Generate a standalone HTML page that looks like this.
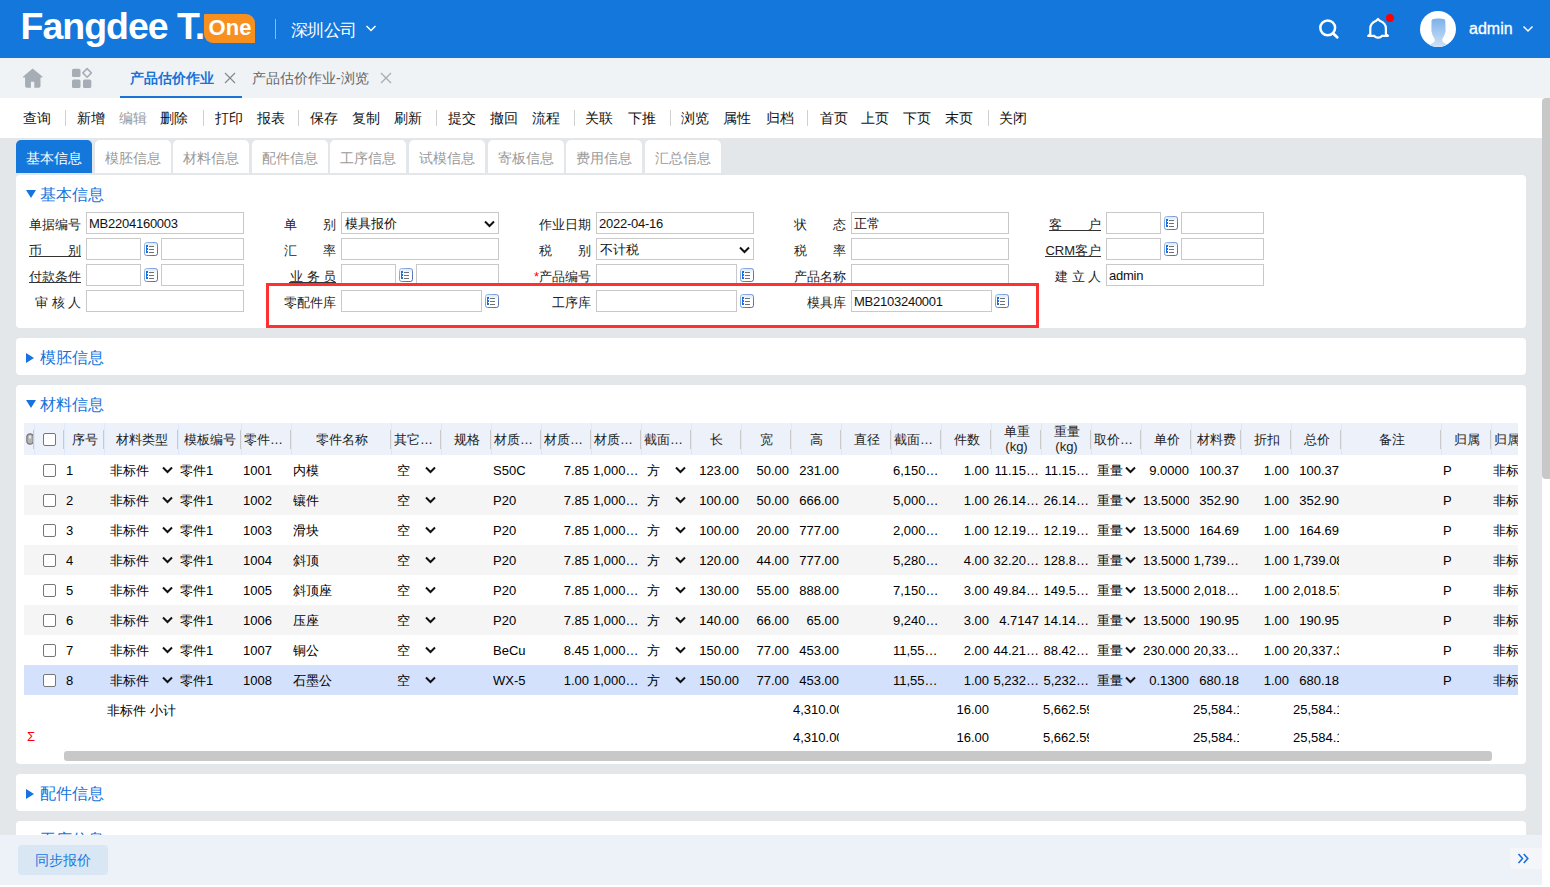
<!DOCTYPE html><html><head><meta charset="utf-8"><style>
*{box-sizing:border-box}
html,body{margin:0;padding:0}
body{width:1550px;height:887px;overflow:hidden;position:relative;background:#fff;font-family:"Liberation Sans",sans-serif;font-size:13px;color:#000}
.ab{position:absolute}
.nw{white-space:nowrap}
.c{display:inline-block;width:1em;text-align:center;font-style:normal}
#hdr{left:0;top:0;width:1550px;height:58px;background:#1377dc}
#tabbar{left:0;top:58px;width:1550px;height:40px;background:#eff3f6}
#toolbar{left:0;top:98px;width:1542px;height:40px;background:#fff}
#content{left:0;top:138px;width:1542px;height:747px;background:#e3e7ea}
.tb{top:108px;font-size:14px;line-height:20px;color:#000;white-space:nowrap}
.tsep{top:110px;width:1px;height:16px;background:#d0d0d0}
.stab{top:140px;width:76px;height:33px;background:#fff;border-radius:5px 5px 0 0;font-size:14px;line-height:34px;padding-top:1px;text-align:center;color:#999}
.stab.on{background:#1377dc;color:#fff}
.panel{left:16px;width:1510px;background:#fff;border-radius:4px}
.ptitle{font-size:16px;line-height:20px;color:#1473de;white-space:nowrap}
.tri-d{width:0;height:0;border-left:5px solid transparent;border-right:5px solid transparent;border-top:8px solid #1473de}
.tri-r{width:0;height:0;border-top:5px solid transparent;border-bottom:5px solid transparent;border-left:8px solid #1473de}
.inp{height:22px;border:1px solid #c9c9c9;background:#fff;font-size:13px;line-height:22px;padding-left:2px;white-space:nowrap;color:#111;letter-spacing:-0.25px}
.lbl{height:22px;line-height:22px;font-size:13px;color:#222;white-space:nowrap}
.lj{display:flex;justify-content:space-between}
.u{text-decoration:underline}
.ic{width:14px;height:14px}
.chev{width:9px;height:6px}
.th{top:423px;height:32px;background:#edf1f9}
.cell{position:absolute;overflow:hidden;white-space:nowrap;text-overflow:clip;height:30px;line-height:30px;padding:0 2px}
</style></head><body>

<div id="hdr" class="ab"></div>
<div class="ab nw" style="left:20.5px;top:6.3px;font-size:37.5px;line-height:40px;font-weight:bold;color:#fff;letter-spacing:-1px">Fangdee T.</div>
<div class="ab" style="left:204px;top:13.5px;width:51px;height:29px;background:#f7901e;border-radius:1px 9px 0 9px"></div>
<div class="ab nw" style="left:207px;top:13px;width:46px;text-align:center;font-size:22px;line-height:30px;color:#fff;font-weight:bold">One</div>
<div class="ab" style="left:275px;top:19px;width:1px;height:20px;background:rgba(255,255,255,.5)"></div>
<div class="ab nw" style="left:290.5px;top:19.5px;font-size:16.5px;line-height:20px;color:#fff"><i class="c">深</i><i class="c">圳</i><i class="c">公</i><i class="c">司</i></div>
<svg class="ab" style="left:365px;top:24px" width="12" height="9" viewBox="0 0 12 9"><path d="M1.5 2 L6 6.5 L10.5 2" fill="none" stroke="#fff" stroke-width="1.5"/></svg>
<svg class="ab" style="left:1316px;top:16px" width="26" height="26" viewBox="0 0 26 26"><circle cx="11.7" cy="11.8" r="7.4" fill="none" stroke="#fff" stroke-width="2.5"/><path d="M17 17.2 L21.2 21.2" stroke="#fff" stroke-width="2.8" stroke-linecap="round"/></svg>
<svg class="ab" style="left:1365px;top:16px" width="26" height="26" viewBox="0 0 26 26"><path d="M5.3 18.2 L5.3 12.5 C5.3 8.5 8 6 11.2 4.8 L13 3 L14.8 4.8 C18 6 20.9 8.5 20.9 12.5 L20.9 18.2 L23 19.9 L16.8 19.9 C15.8 22.2 10.4 22.2 9.4 19.9 L3.2 19.9 Z" fill="none" stroke="#fff" stroke-width="2.2" stroke-linejoin="round"/></svg>
<div class="ab" style="left:1386px;top:14px;width:8px;height:8px;border-radius:50%;background:#ff0000"></div>
<div class="ab" style="left:1420px;top:11px;width:36px;height:36px;border-radius:50%;background:#fff;overflow:hidden"><svg width="36" height="36" viewBox="0 0 36 36"><defs><linearGradient id="ag" x1="0" y1="0" x2="0" y2="1"><stop offset="0" stop-color="#7cb1ea"/><stop offset="1" stop-color="#d3e4f7"/></linearGradient></defs><path d="M11.5 9.5 Q12.5 7.3 18.5 7.6 Q24.5 7.3 25.3 9.5 L25.6 20 Q25 24 22.5 27.8 Q21.6 29.8 23.2 31.2 Q25.5 33 28 34 L29 37 L8 37 L9 34 Q11.5 33 13.8 31.2 Q15.4 29.8 14.5 27.8 Q12 24 11.4 20 Z" fill="url(#ag)"/></svg></div>
<div class="ab nw" style="left:1469px;top:19px;font-size:16px;line-height:20px;color:#fff;-webkit-text-stroke:0.3px #fff">admin</div>
<svg class="ab" style="left:1521.5px;top:24px" width="12" height="10" viewBox="0 0 12 10"><path d="M1.5 2.5 L6 7 L10.5 2.5" fill="none" stroke="#fff" stroke-width="1.5"/></svg>
<div id="tabbar" class="ab"></div>
<svg class="ab" style="left:23px;top:68px;overflow:visible" width="20" height="20" viewBox="0 0 20 20"><path d="M9.6 0.4 L19.4 8.6 Q20 9.6 19 9.6 L17.5 9.6 L17.5 18 Q17.5 19.7 15.8 19.7 L11.3 19.7 L11.3 13.8 L7.9 13.8 L7.9 19.7 L3.8 19.7 Q2.1 19.7 2.1 18 L2.1 9.6 L0.6 9.6 Q-0.4 9.6 0.2 8.6 Z" fill="#a7adb5"/></svg>
<svg class="ab" style="left:72px;top:68px;overflow:visible" width="20" height="20" viewBox="0 0 20 20"><rect x="0" y="0.8" width="8.5" height="8.3" rx="1.6" fill="#a7adb5"/><rect x="0" y="11.5" width="8.5" height="8.5" rx="1.6" fill="#a7adb5"/><rect x="11" y="11.5" width="8.3" height="8.5" rx="1.6" fill="#a7adb5"/><path d="M15.1 0.6 L19.4 4.9 L15.1 9.2 L10.8 4.9 Z" fill="none" stroke="#a7adb5" stroke-width="1.5" stroke-linejoin="round"/></svg>
<div class="ab nw" style="left:130px;top:68px;font-size:14px;line-height:20px;color:#1a73d9;font-weight:bold"><i class="c">产</i><i class="c">品</i><i class="c">估</i><i class="c">价</i><i class="c">作</i><i class="c">业</i></div>
<svg class="ab" style="left:224px;top:72px" width="12" height="12" viewBox="0 0 12 12"><path d="M1 1 L11 11 M11 1 L1 11" stroke="#888" stroke-width="1.2"/></svg>
<div class="ab" style="left:120px;top:96px;width:122px;height:2px;background:#1a73d9"></div>
<div class="ab nw" style="left:252px;top:68px;font-size:14px;line-height:20px;color:#666"><i class="c">产</i><i class="c">品</i><i class="c">估</i><i class="c">价</i><i class="c">作</i><i class="c">业</i>-<i class="c">浏</i><i class="c">览</i></div>
<svg class="ab" style="left:380px;top:72px" width="12" height="12" viewBox="0 0 12 12"><path d="M1 1 L11 11 M11 1 L1 11" stroke="#aaa" stroke-width="1.2"/></svg>
<div id="toolbar" class="ab"></div>
<div class="ab tb" style="left:23.0px;color:#111"><i class="c">查</i><i class="c">询</i></div>
<div class="ab tsep" style="left:65px"></div>
<div class="ab tb" style="left:76.5px;color:#111"><i class="c">新</i><i class="c">增</i></div>
<div class="ab tb" style="left:119.0px;color:#999"><i class="c">编</i><i class="c">辑</i></div>
<div class="ab tb" style="left:160.0px;color:#111"><i class="c">删</i><i class="c">除</i></div>
<div class="ab tsep" style="left:203px"></div>
<div class="ab tb" style="left:214.5px;color:#111"><i class="c">打</i><i class="c">印</i></div>
<div class="ab tb" style="left:256.5px;color:#111"><i class="c">报</i><i class="c">表</i></div>
<div class="ab tsep" style="left:298px"></div>
<div class="ab tb" style="left:310.0px;color:#111"><i class="c">保</i><i class="c">存</i></div>
<div class="ab tb" style="left:352.0px;color:#111"><i class="c">复</i><i class="c">制</i></div>
<div class="ab tb" style="left:394.0px;color:#111"><i class="c">刷</i><i class="c">新</i></div>
<div class="ab tsep" style="left:436px"></div>
<div class="ab tb" style="left:448.0px;color:#111"><i class="c">提</i><i class="c">交</i></div>
<div class="ab tb" style="left:490.0px;color:#111"><i class="c">撤</i><i class="c">回</i></div>
<div class="ab tb" style="left:532.0px;color:#111"><i class="c">流</i><i class="c">程</i></div>
<div class="ab tsep" style="left:574px"></div>
<div class="ab tb" style="left:585.0px;color:#111"><i class="c">关</i><i class="c">联</i></div>
<div class="ab tb" style="left:628.0px;color:#111"><i class="c">下</i><i class="c">推</i></div>
<div class="ab tsep" style="left:670px"></div>
<div class="ab tb" style="left:681.0px;color:#111"><i class="c">浏</i><i class="c">览</i></div>
<div class="ab tb" style="left:723.0px;color:#111"><i class="c">属</i><i class="c">性</i></div>
<div class="ab tb" style="left:766.0px;color:#111"><i class="c">归</i><i class="c">档</i></div>
<div class="ab tsep" style="left:807px"></div>
<div class="ab tb" style="left:819.5px;color:#111"><i class="c">首</i><i class="c">页</i></div>
<div class="ab tb" style="left:861.0px;color:#111"><i class="c">上</i><i class="c">页</i></div>
<div class="ab tb" style="left:903.0px;color:#111"><i class="c">下</i><i class="c">页</i></div>
<div class="ab tb" style="left:945.0px;color:#111"><i class="c">末</i><i class="c">页</i></div>
<div class="ab tsep" style="left:988px"></div>
<div class="ab tb" style="left:998.5px;color:#111"><i class="c">关</i><i class="c">闭</i></div>
<div id="content" class="ab"></div>
<div class="ab stab on" style="left:16.0px"><i class="c">基</i><i class="c">本</i><i class="c">信</i><i class="c">息</i></div>
<div class="ab stab" style="left:94.6px"><i class="c">模</i><i class="c">胚</i><i class="c">信</i><i class="c">息</i></div>
<div class="ab stab" style="left:173.2px"><i class="c">材</i><i class="c">料</i><i class="c">信</i><i class="c">息</i></div>
<div class="ab stab" style="left:251.8px"><i class="c">配</i><i class="c">件</i><i class="c">信</i><i class="c">息</i></div>
<div class="ab stab" style="left:330.4px"><i class="c">工</i><i class="c">序</i><i class="c">信</i><i class="c">息</i></div>
<div class="ab stab" style="left:409.0px"><i class="c">试</i><i class="c">模</i><i class="c">信</i><i class="c">息</i></div>
<div class="ab stab" style="left:487.6px"><i class="c">寄</i><i class="c">板</i><i class="c">信</i><i class="c">息</i></div>
<div class="ab stab" style="left:566.2px"><i class="c">费</i><i class="c">用</i><i class="c">信</i><i class="c">息</i></div>
<div class="ab stab" style="left:644.8px"><i class="c">汇</i><i class="c">总</i><i class="c">信</i><i class="c">息</i></div>
<div class="ab panel" style="top:175px;height:153px"></div>
<div class="ab tri-d" style="left:26px;top:190px"></div>
<div class="ab ptitle" style="left:40px;top:185px"><i class="c">基</i><i class="c">本</i><i class="c">信</i><i class="c">息</i></div>
<div class="ab lbl" style="left:-19px;top:214px;width:100px;text-align:right"><i class="c">单</i><i class="c">据</i><i class="c">编</i><i class="c">号</i></div>
<div class="ab inp" style="left:86px;top:212px;width:158px;padding-left:2px">MB2204160003</div>
<div class="ab lbl lj" style="left:284px;top:214px;width:52px"><span><i class="c">单</i></span><span><i class="c">别</i></span></div>
<div class="ab inp" style="left:341px;top:212px;width:158px;padding-left:3px"><i class="c">模</i><i class="c">具</i><i class="c">报</i><i class="c">价</i></div>
<svg class="ab" style="left:483.5px;top:219.5px" width="11" height="8" viewBox="0 0 11 8"><path d="M1 1.5 L5.5 6 L10 1.5" fill="none" stroke="#111" stroke-width="2"/></svg>
<div class="ab lbl" style="left:491px;top:214px;width:100px;text-align:right"><i class="c">作</i><i class="c">业</i><i class="c">日</i><i class="c">期</i></div>
<div class="ab inp" style="left:596px;top:212px;width:158px;padding-left:2px">2022-04-16</div>
<div class="ab lbl lj" style="left:794px;top:214px;width:52px"><span><i class="c">状</i></span><span><i class="c">态</i></span></div>
<div class="ab inp" style="left:851px;top:212px;width:158px;padding-left:2px"><i class="c">正</i><i class="c">常</i></div>
<div class="ab lbl lj" style="left:1049px;top:214px;width:52px"><span><i class="c">客</i></span><span><i class="c">户</i></span></div>
<div class="ab" style="left:1049px;top:230px;width:52px;height:1px;background:#333"></div>
<div class="ab inp" style="left:1106px;top:212px;width:55px;padding-left:2px"></div>
<svg class="ab ic" style="left:1164px;top:216px" width="14" height="14" viewBox="0 0 14 14"><defs><linearGradient id="ig1" x1="0" y1="0" x2="1" y2="1"><stop offset="0" stop-color="#9cc2f2"/><stop offset="1" stop-color="#4c5fa8"/></linearGradient><linearGradient id="if1" x1="0" y1="0" x2="0" y2="1"><stop offset="0" stop-color="#d8e8fb"/><stop offset="0.45" stop-color="#fff"/></linearGradient></defs><rect x="0.5" y="0.5" width="13" height="13" rx="2.2" fill="url(#if1)" stroke="url(#ig1)"/><rect x="2" y="3" width="1" height="8" fill="#1a6fe0"/><rect x="3" y="3" width="1" height="2" fill="#1a6fe0"/><rect x="3" y="6" width="1" height="2" fill="#1a6fe0"/><rect x="3" y="9" width="1" height="2" fill="#1a6fe0"/><rect x="5" y="4" width="5" height="1" fill="#707070"/><rect x="5" y="7" width="5" height="1" fill="#707070"/><rect x="5" y="10" width="5" height="1" fill="#707070"/></svg>
<div class="ab inp" style="left:1181px;top:212px;width:83px;padding-left:2px"></div>
<div class="ab lbl lj" style="left:29px;top:240px;width:52px"><span><i class="c">币</i></span><span><i class="c">别</i></span></div>
<div class="ab" style="left:29px;top:256px;width:52px;height:1px;background:#333"></div>
<div class="ab inp" style="left:86px;top:238px;width:55px;padding-left:2px"></div>
<svg class="ab ic" style="left:144px;top:242px" width="14" height="14" viewBox="0 0 14 14"><defs><linearGradient id="ig2" x1="0" y1="0" x2="1" y2="1"><stop offset="0" stop-color="#9cc2f2"/><stop offset="1" stop-color="#4c5fa8"/></linearGradient><linearGradient id="if2" x1="0" y1="0" x2="0" y2="1"><stop offset="0" stop-color="#d8e8fb"/><stop offset="0.45" stop-color="#fff"/></linearGradient></defs><rect x="0.5" y="0.5" width="13" height="13" rx="2.2" fill="url(#if2)" stroke="url(#ig2)"/><rect x="2" y="3" width="1" height="8" fill="#1a6fe0"/><rect x="3" y="3" width="1" height="2" fill="#1a6fe0"/><rect x="3" y="6" width="1" height="2" fill="#1a6fe0"/><rect x="3" y="9" width="1" height="2" fill="#1a6fe0"/><rect x="5" y="4" width="5" height="1" fill="#707070"/><rect x="5" y="7" width="5" height="1" fill="#707070"/><rect x="5" y="10" width="5" height="1" fill="#707070"/></svg>
<div class="ab inp" style="left:161px;top:238px;width:83px;padding-left:2px"></div>
<div class="ab lbl lj" style="left:284px;top:240px;width:52px"><span><i class="c">汇</i></span><span><i class="c">率</i></span></div>
<div class="ab inp" style="left:341px;top:238px;width:158px;padding-left:2px"></div>
<div class="ab lbl lj" style="left:539px;top:240px;width:52px"><span><i class="c">税</i></span><span><i class="c">别</i></span></div>
<div class="ab inp" style="left:596px;top:238px;width:158px;padding-left:3px"><i class="c">不</i><i class="c">计</i><i class="c">税</i></div>
<svg class="ab" style="left:738.5px;top:245.5px" width="11" height="8" viewBox="0 0 11 8"><path d="M1 1.5 L5.5 6 L10 1.5" fill="none" stroke="#111" stroke-width="2"/></svg>
<div class="ab lbl lj" style="left:794px;top:240px;width:52px"><span><i class="c">税</i></span><span><i class="c">率</i></span></div>
<div class="ab inp" style="left:851px;top:238px;width:158px;padding-left:2px"></div>
<div class="ab lbl" style="left:1001px;top:240px;width:100px;text-align:right">CRM<i class="c">客</i><i class="c">户</i></div>
<div class="ab" style="left:1045px;top:256px;width:56px;height:1px;background:#333"></div>
<div class="ab inp" style="left:1106px;top:238px;width:55px;padding-left:2px"></div>
<svg class="ab ic" style="left:1164px;top:242px" width="14" height="14" viewBox="0 0 14 14"><defs><linearGradient id="ig3" x1="0" y1="0" x2="1" y2="1"><stop offset="0" stop-color="#9cc2f2"/><stop offset="1" stop-color="#4c5fa8"/></linearGradient><linearGradient id="if3" x1="0" y1="0" x2="0" y2="1"><stop offset="0" stop-color="#d8e8fb"/><stop offset="0.45" stop-color="#fff"/></linearGradient></defs><rect x="0.5" y="0.5" width="13" height="13" rx="2.2" fill="url(#if3)" stroke="url(#ig3)"/><rect x="2" y="3" width="1" height="8" fill="#1a6fe0"/><rect x="3" y="3" width="1" height="2" fill="#1a6fe0"/><rect x="3" y="6" width="1" height="2" fill="#1a6fe0"/><rect x="3" y="9" width="1" height="2" fill="#1a6fe0"/><rect x="5" y="4" width="5" height="1" fill="#707070"/><rect x="5" y="7" width="5" height="1" fill="#707070"/><rect x="5" y="10" width="5" height="1" fill="#707070"/></svg>
<div class="ab inp" style="left:1181px;top:238px;width:83px;padding-left:2px"></div>
<div class="ab lbl" style="left:-19px;top:266px;width:100px;text-align:right"><i class="c">付</i><i class="c">款</i><i class="c">条</i><i class="c">件</i></div>
<div class="ab" style="left:29px;top:282px;width:52px;height:1px;background:#333"></div>
<div class="ab inp" style="left:86px;top:264px;width:55px;padding-left:2px"></div>
<svg class="ab ic" style="left:144px;top:268px" width="14" height="14" viewBox="0 0 14 14"><defs><linearGradient id="ig4" x1="0" y1="0" x2="1" y2="1"><stop offset="0" stop-color="#9cc2f2"/><stop offset="1" stop-color="#4c5fa8"/></linearGradient><linearGradient id="if4" x1="0" y1="0" x2="0" y2="1"><stop offset="0" stop-color="#d8e8fb"/><stop offset="0.45" stop-color="#fff"/></linearGradient></defs><rect x="0.5" y="0.5" width="13" height="13" rx="2.2" fill="url(#if4)" stroke="url(#ig4)"/><rect x="2" y="3" width="1" height="8" fill="#1a6fe0"/><rect x="3" y="3" width="1" height="2" fill="#1a6fe0"/><rect x="3" y="6" width="1" height="2" fill="#1a6fe0"/><rect x="3" y="9" width="1" height="2" fill="#1a6fe0"/><rect x="5" y="4" width="5" height="1" fill="#707070"/><rect x="5" y="7" width="5" height="1" fill="#707070"/><rect x="5" y="10" width="5" height="1" fill="#707070"/></svg>
<div class="ab inp" style="left:161px;top:264px;width:83px;padding-left:2px"></div>
<div class="ab lbl lj" style="left:290px;top:266px;width:46px"><span><i class="c">业</i></span><span><i class="c">务</i></span><span><i class="c">员</i></span></div>
<div class="ab" style="left:289px;top:282px;width:47px;height:1px;background:#333"></div>
<div class="ab inp" style="left:341px;top:264px;width:55px;padding-left:2px"></div>
<svg class="ab ic" style="left:399px;top:268px" width="14" height="14" viewBox="0 0 14 14"><defs><linearGradient id="ig5" x1="0" y1="0" x2="1" y2="1"><stop offset="0" stop-color="#9cc2f2"/><stop offset="1" stop-color="#4c5fa8"/></linearGradient><linearGradient id="if5" x1="0" y1="0" x2="0" y2="1"><stop offset="0" stop-color="#d8e8fb"/><stop offset="0.45" stop-color="#fff"/></linearGradient></defs><rect x="0.5" y="0.5" width="13" height="13" rx="2.2" fill="url(#if5)" stroke="url(#ig5)"/><rect x="2" y="3" width="1" height="8" fill="#1a6fe0"/><rect x="3" y="3" width="1" height="2" fill="#1a6fe0"/><rect x="3" y="6" width="1" height="2" fill="#1a6fe0"/><rect x="3" y="9" width="1" height="2" fill="#1a6fe0"/><rect x="5" y="4" width="5" height="1" fill="#707070"/><rect x="5" y="7" width="5" height="1" fill="#707070"/><rect x="5" y="10" width="5" height="1" fill="#707070"/></svg>
<div class="ab inp" style="left:416px;top:264px;width:83px;padding-left:2px"></div>
<div class="ab lbl" style="left:491px;top:266px;width:100px;text-align:right"><span style="color:#f00">*</span><i class="c">产</i><i class="c">品</i><i class="c">编</i><i class="c">号</i></div>
<div class="ab inp" style="left:596px;top:264px;width:141px;padding-left:2px"></div>
<svg class="ab ic" style="left:740px;top:268px" width="14" height="14" viewBox="0 0 14 14"><defs><linearGradient id="ig6" x1="0" y1="0" x2="1" y2="1"><stop offset="0" stop-color="#9cc2f2"/><stop offset="1" stop-color="#4c5fa8"/></linearGradient><linearGradient id="if6" x1="0" y1="0" x2="0" y2="1"><stop offset="0" stop-color="#d8e8fb"/><stop offset="0.45" stop-color="#fff"/></linearGradient></defs><rect x="0.5" y="0.5" width="13" height="13" rx="2.2" fill="url(#if6)" stroke="url(#ig6)"/><rect x="2" y="3" width="1" height="8" fill="#1a6fe0"/><rect x="3" y="3" width="1" height="2" fill="#1a6fe0"/><rect x="3" y="6" width="1" height="2" fill="#1a6fe0"/><rect x="3" y="9" width="1" height="2" fill="#1a6fe0"/><rect x="5" y="4" width="5" height="1" fill="#707070"/><rect x="5" y="7" width="5" height="1" fill="#707070"/><rect x="5" y="10" width="5" height="1" fill="#707070"/></svg>
<div class="ab lbl" style="left:746px;top:266px;width:100px;text-align:right"><i class="c">产</i><i class="c">品</i><i class="c">名</i><i class="c">称</i></div>
<div class="ab inp" style="left:851px;top:264px;width:158px;padding-left:2px"></div>
<div class="ab lbl lj" style="left:1055px;top:266px;width:46px"><span><i class="c">建</i></span><span><i class="c">立</i></span><span><i class="c">人</i></span></div>
<div class="ab inp" style="left:1106px;top:264px;width:158px;padding-left:2px">admin</div>
<div class="ab lbl lj" style="left:35px;top:292px;width:46px"><span><i class="c">审</i></span><span><i class="c">核</i></span><span><i class="c">人</i></span></div>
<div class="ab inp" style="left:86px;top:290px;width:158px;padding-left:2px"></div>
<div class="ab lbl" style="left:236px;top:292px;width:100px;text-align:right"><i class="c">零</i><i class="c">配</i><i class="c">件</i><i class="c">库</i></div>
<div class="ab inp" style="left:341px;top:290px;width:141px;padding-left:2px"></div>
<svg class="ab ic" style="left:485px;top:294px" width="14" height="14" viewBox="0 0 14 14"><defs><linearGradient id="ig7" x1="0" y1="0" x2="1" y2="1"><stop offset="0" stop-color="#9cc2f2"/><stop offset="1" stop-color="#4c5fa8"/></linearGradient><linearGradient id="if7" x1="0" y1="0" x2="0" y2="1"><stop offset="0" stop-color="#d8e8fb"/><stop offset="0.45" stop-color="#fff"/></linearGradient></defs><rect x="0.5" y="0.5" width="13" height="13" rx="2.2" fill="url(#if7)" stroke="url(#ig7)"/><rect x="2" y="3" width="1" height="8" fill="#1a6fe0"/><rect x="3" y="3" width="1" height="2" fill="#1a6fe0"/><rect x="3" y="6" width="1" height="2" fill="#1a6fe0"/><rect x="3" y="9" width="1" height="2" fill="#1a6fe0"/><rect x="5" y="4" width="5" height="1" fill="#707070"/><rect x="5" y="7" width="5" height="1" fill="#707070"/><rect x="5" y="10" width="5" height="1" fill="#707070"/></svg>
<div class="ab lbl" style="left:491px;top:292px;width:100px;text-align:right"><i class="c">工</i><i class="c">序</i><i class="c">库</i></div>
<div class="ab inp" style="left:596px;top:290px;width:141px;padding-left:2px"></div>
<svg class="ab ic" style="left:740px;top:294px" width="14" height="14" viewBox="0 0 14 14"><defs><linearGradient id="ig8" x1="0" y1="0" x2="1" y2="1"><stop offset="0" stop-color="#9cc2f2"/><stop offset="1" stop-color="#4c5fa8"/></linearGradient><linearGradient id="if8" x1="0" y1="0" x2="0" y2="1"><stop offset="0" stop-color="#d8e8fb"/><stop offset="0.45" stop-color="#fff"/></linearGradient></defs><rect x="0.5" y="0.5" width="13" height="13" rx="2.2" fill="url(#if8)" stroke="url(#ig8)"/><rect x="2" y="3" width="1" height="8" fill="#1a6fe0"/><rect x="3" y="3" width="1" height="2" fill="#1a6fe0"/><rect x="3" y="6" width="1" height="2" fill="#1a6fe0"/><rect x="3" y="9" width="1" height="2" fill="#1a6fe0"/><rect x="5" y="4" width="5" height="1" fill="#707070"/><rect x="5" y="7" width="5" height="1" fill="#707070"/><rect x="5" y="10" width="5" height="1" fill="#707070"/></svg>
<div class="ab lbl" style="left:746px;top:292px;width:100px;text-align:right"><i class="c">模</i><i class="c">具</i><i class="c">库</i></div>
<div class="ab inp" style="left:851px;top:290px;width:141px;padding-left:2px">MB2103240001</div>
<svg class="ab ic" style="left:995px;top:294px" width="14" height="14" viewBox="0 0 14 14"><defs><linearGradient id="ig9" x1="0" y1="0" x2="1" y2="1"><stop offset="0" stop-color="#9cc2f2"/><stop offset="1" stop-color="#4c5fa8"/></linearGradient><linearGradient id="if9" x1="0" y1="0" x2="0" y2="1"><stop offset="0" stop-color="#d8e8fb"/><stop offset="0.45" stop-color="#fff"/></linearGradient></defs><rect x="0.5" y="0.5" width="13" height="13" rx="2.2" fill="url(#if9)" stroke="url(#ig9)"/><rect x="2" y="3" width="1" height="8" fill="#1a6fe0"/><rect x="3" y="3" width="1" height="2" fill="#1a6fe0"/><rect x="3" y="6" width="1" height="2" fill="#1a6fe0"/><rect x="3" y="9" width="1" height="2" fill="#1a6fe0"/><rect x="5" y="4" width="5" height="1" fill="#707070"/><rect x="5" y="7" width="5" height="1" fill="#707070"/><rect x="5" y="10" width="5" height="1" fill="#707070"/></svg>
<div class="ab" style="left:266px;top:283px;width:773px;height:45px;border:3px solid #ff3030"></div>
<div class="ab panel" style="top:338px;height:37px"></div>
<div class="ab tri-r" style="left:26px;top:353px"></div>
<div class="ab ptitle" style="left:40px;top:348px"><i class="c">模</i><i class="c">胚</i><i class="c">信</i><i class="c">息</i></div>
<div class="ab panel" style="top:385px;height:379px"></div>
<div class="ab tri-d" style="left:26px;top:400px"></div>
<div class="ab ptitle" style="left:40px;top:395px"><i class="c">材</i><i class="c">料</i><i class="c">信</i><i class="c">息</i></div>
<div class="ab" style="left:24px;top:423px;width:1494px;height:340px;overflow:hidden">
<div class="ab" style="left:0;top:0;width:1494px;height:32px;background:#edf1f9"></div>
<svg class="ab" style="left:1.5px;top:10px" width="8" height="12" viewBox="0 0 8 12"><rect x="0.8" y="0.8" width="6.4" height="10.4" rx="3.2" fill="#b5b5b5" stroke="#777" stroke-width="1.2"/><rect x="3" y="2.5" width="2" height="3" rx="1" fill="#eee"/></svg>
<div class="ab" style="left:9px;top:7px;width:1px;height:19px;background:#c9c9c9"></div>
<div class="ab" style="left:10px;top:0;width:1px;height:32px;background:#dde8f8"></div>
<div class="ab" style="left:19.0px;top:10.0px;width:13px;height:13px;border:1px solid #767676;border-radius:2px;background:#fff"></div>
<div class="ab" style="left:39px;top:7px;width:1px;height:19px;background:#c9c9c9"></div>
<div class="ab" style="left:40px;top:0;width:1px;height:32px;background:#dde8f8"></div>
<div class="cell" style="left:41px;top:2px;width:39px;text-align:center;color:#222;padding:0 2px"><i class="c">序</i><i class="c">号</i></div>
<div class="ab" style="left:79px;top:7px;width:1px;height:19px;background:#c9c9c9"></div>
<div class="ab" style="left:80px;top:0;width:1px;height:32px;background:#dde8f8"></div>
<div class="cell" style="left:81px;top:2px;width:73px;text-align:center;color:#222;padding:0 2px"><i class="c">材</i><i class="c">料</i><i class="c">类</i><i class="c">型</i></div>
<div class="ab" style="left:153px;top:7px;width:1px;height:19px;background:#c9c9c9"></div>
<div class="ab" style="left:154px;top:0;width:1px;height:32px;background:#dde8f8"></div>
<div class="cell" style="left:155px;top:2px;width:62px;text-align:center;color:#222;padding:0 2px"><i class="c">模</i><i class="c">板</i><i class="c">编</i><i class="c">号</i></div>
<div class="ab" style="left:216px;top:7px;width:1px;height:19px;background:#c9c9c9"></div>
<div class="ab" style="left:217px;top:0;width:1px;height:32px;background:#dde8f8"></div>
<div class="cell" style="left:218px;top:2px;width:49px;text-align:left;color:#222;padding:0 2px"><i class="c">零</i><i class="c">件</i>…</div>
<div class="ab" style="left:266px;top:7px;width:1px;height:19px;background:#c9c9c9"></div>
<div class="ab" style="left:267px;top:0;width:1px;height:32px;background:#dde8f8"></div>
<div class="cell" style="left:268px;top:2px;width:99px;text-align:center;color:#222;padding:0 2px"><i class="c">零</i><i class="c">件</i><i class="c">名</i><i class="c">称</i></div>
<div class="ab" style="left:366px;top:7px;width:1px;height:19px;background:#c9c9c9"></div>
<div class="ab" style="left:367px;top:0;width:1px;height:32px;background:#dde8f8"></div>
<div class="cell" style="left:368px;top:2px;width:49px;text-align:left;color:#222;padding:0 2px"><i class="c">其</i><i class="c">它</i>…</div>
<div class="ab" style="left:416px;top:7px;width:1px;height:19px;background:#c9c9c9"></div>
<div class="ab" style="left:417px;top:0;width:1px;height:32px;background:#dde8f8"></div>
<div class="cell" style="left:418px;top:2px;width:49px;text-align:center;color:#222;padding:0 2px"><i class="c">规</i><i class="c">格</i></div>
<div class="ab" style="left:466px;top:7px;width:1px;height:19px;background:#c9c9c9"></div>
<div class="ab" style="left:467px;top:0;width:1px;height:32px;background:#dde8f8"></div>
<div class="cell" style="left:468px;top:2px;width:49px;text-align:left;color:#222;padding:0 2px"><i class="c">材</i><i class="c">质</i>…</div>
<div class="ab" style="left:516px;top:7px;width:1px;height:19px;background:#c9c9c9"></div>
<div class="ab" style="left:517px;top:0;width:1px;height:32px;background:#dde8f8"></div>
<div class="cell" style="left:518px;top:2px;width:49px;text-align:left;color:#222;padding:0 2px"><i class="c">材</i><i class="c">质</i>…</div>
<div class="ab" style="left:566px;top:7px;width:1px;height:19px;background:#c9c9c9"></div>
<div class="ab" style="left:567px;top:0;width:1px;height:32px;background:#dde8f8"></div>
<div class="cell" style="left:568px;top:2px;width:49px;text-align:left;color:#222;padding:0 2px"><i class="c">材</i><i class="c">质</i>…</div>
<div class="ab" style="left:616px;top:7px;width:1px;height:19px;background:#c9c9c9"></div>
<div class="ab" style="left:617px;top:0;width:1px;height:32px;background:#dde8f8"></div>
<div class="cell" style="left:618px;top:2px;width:49px;text-align:left;color:#222;padding:0 2px"><i class="c">截</i><i class="c">面</i>…</div>
<div class="ab" style="left:666px;top:7px;width:1px;height:19px;background:#c9c9c9"></div>
<div class="ab" style="left:667px;top:0;width:1px;height:32px;background:#dde8f8"></div>
<div class="cell" style="left:668px;top:2px;width:49px;text-align:center;color:#222;padding:0 2px"><i class="c">长</i></div>
<div class="ab" style="left:716px;top:7px;width:1px;height:19px;background:#c9c9c9"></div>
<div class="ab" style="left:717px;top:0;width:1px;height:32px;background:#dde8f8"></div>
<div class="cell" style="left:718px;top:2px;width:49px;text-align:center;color:#222;padding:0 2px"><i class="c">宽</i></div>
<div class="ab" style="left:766px;top:7px;width:1px;height:19px;background:#c9c9c9"></div>
<div class="ab" style="left:767px;top:0;width:1px;height:32px;background:#dde8f8"></div>
<div class="cell" style="left:768px;top:2px;width:49px;text-align:center;color:#222;padding:0 2px"><i class="c">高</i></div>
<div class="ab" style="left:816px;top:7px;width:1px;height:19px;background:#c9c9c9"></div>
<div class="ab" style="left:817px;top:0;width:1px;height:32px;background:#dde8f8"></div>
<div class="cell" style="left:818px;top:2px;width:49px;text-align:center;color:#222;padding:0 2px"><i class="c">直</i><i class="c">径</i></div>
<div class="ab" style="left:866px;top:7px;width:1px;height:19px;background:#c9c9c9"></div>
<div class="ab" style="left:867px;top:0;width:1px;height:32px;background:#dde8f8"></div>
<div class="cell" style="left:868px;top:2px;width:49px;text-align:left;color:#222;padding:0 2px"><i class="c">截</i><i class="c">面</i>…</div>
<div class="ab" style="left:916px;top:7px;width:1px;height:19px;background:#c9c9c9"></div>
<div class="ab" style="left:917px;top:0;width:1px;height:32px;background:#dde8f8"></div>
<div class="cell" style="left:918px;top:2px;width:49px;text-align:center;color:#222;padding:0 2px"><i class="c">件</i><i class="c">数</i></div>
<div class="ab" style="left:966px;top:7px;width:1px;height:19px;background:#c9c9c9"></div>
<div class="ab" style="left:967px;top:0;width:1px;height:32px;background:#dde8f8"></div>
<div class="ab" style="left:968px;top:1px;width:49px;height:32px;line-height:15px;text-align:center;font-size:13px;color:#222;white-space:nowrap"><i class="c">单</i><i class="c">重</i><br>(kg)</div>
<div class="ab" style="left:1016px;top:7px;width:1px;height:19px;background:#c9c9c9"></div>
<div class="ab" style="left:1017px;top:0;width:1px;height:32px;background:#dde8f8"></div>
<div class="ab" style="left:1018px;top:1px;width:49px;height:32px;line-height:15px;text-align:center;font-size:13px;color:#222;white-space:nowrap"><i class="c">重</i><i class="c">量</i><br>(kg)</div>
<div class="ab" style="left:1066px;top:7px;width:1px;height:19px;background:#c9c9c9"></div>
<div class="ab" style="left:1067px;top:0;width:1px;height:32px;background:#dde8f8"></div>
<div class="cell" style="left:1068px;top:2px;width:49px;text-align:left;color:#222;padding:0 2px"><i class="c">取</i><i class="c">价</i>…</div>
<div class="ab" style="left:1116px;top:7px;width:1px;height:19px;background:#c9c9c9"></div>
<div class="ab" style="left:1117px;top:0;width:1px;height:32px;background:#dde8f8"></div>
<div class="cell" style="left:1118px;top:2px;width:49px;text-align:center;color:#222;padding:0 2px"><i class="c">单</i><i class="c">价</i></div>
<div class="ab" style="left:1166px;top:7px;width:1px;height:19px;background:#c9c9c9"></div>
<div class="ab" style="left:1167px;top:0;width:1px;height:32px;background:#dde8f8"></div>
<div class="cell" style="left:1168px;top:2px;width:49px;text-align:center;color:#222;padding:0 2px"><i class="c">材</i><i class="c">料</i><i class="c">费</i></div>
<div class="ab" style="left:1216px;top:7px;width:1px;height:19px;background:#c9c9c9"></div>
<div class="ab" style="left:1217px;top:0;width:1px;height:32px;background:#dde8f8"></div>
<div class="cell" style="left:1218px;top:2px;width:49px;text-align:center;color:#222;padding:0 2px"><i class="c">折</i><i class="c">扣</i></div>
<div class="ab" style="left:1266px;top:7px;width:1px;height:19px;background:#c9c9c9"></div>
<div class="ab" style="left:1267px;top:0;width:1px;height:32px;background:#dde8f8"></div>
<div class="cell" style="left:1268px;top:2px;width:49px;text-align:center;color:#222;padding:0 2px"><i class="c">总</i><i class="c">价</i></div>
<div class="ab" style="left:1316px;top:7px;width:1px;height:19px;background:#c9c9c9"></div>
<div class="ab" style="left:1317px;top:0;width:1px;height:32px;background:#dde8f8"></div>
<div class="cell" style="left:1318px;top:2px;width:99px;text-align:center;color:#222;padding:0 2px"><i class="c">备</i><i class="c">注</i></div>
<div class="ab" style="left:1416px;top:7px;width:1px;height:19px;background:#c9c9c9"></div>
<div class="ab" style="left:1417px;top:0;width:1px;height:32px;background:#dde8f8"></div>
<div class="cell" style="left:1418px;top:2px;width:49px;text-align:center;color:#222;padding:0 2px"><i class="c">归</i><i class="c">属</i></div>
<div class="ab" style="left:1466px;top:7px;width:1px;height:19px;background:#c9c9c9"></div>
<div class="ab" style="left:1467px;top:0;width:1px;height:32px;background:#dde8f8"></div>
<div class="cell" style="left:1468px;top:2px;width:68px;text-align:left;color:#222;padding:0 2px"><i class="c">归</i><i class="c">属</i><i class="c">类</i><i class="c">型</i></div>
<div class="ab" style="left:0;top:32px;width:1494px;height:30px;background:#fff"></div>
<div class="ab" style="left:19.0px;top:40.5px;width:13px;height:13px;border:1px solid #767676;border-radius:2px;background:#fff"></div>
<div class="cell" style="left:42px;top:33px;width:36px;padding:0;text-align:left;text-overflow:clip">1</div>
<div class="cell" style="left:86px;top:33px;width:40px;padding:0;text-align:left"><i class="c">非</i><i class="c">标</i><i class="c">件</i></div>
<svg class="ab" style="left:137.5px;top:43.0px" width="11" height="8" viewBox="0 0 11 8"><path d="M1 1.5 L5.5 6 L10 1.5" fill="none" stroke="#111" stroke-width="2"/></svg>
<div class="cell" style="left:156px;top:33px;width:59px;padding:0;text-align:left;text-overflow:clip"><i class="c">零</i><i class="c">件</i>1</div>
<div class="cell" style="left:219px;top:33px;width:46px;padding:0;text-align:left;text-overflow:clip">1001</div>
<div class="cell" style="left:269px;top:33px;width:96px;padding:0;text-align:left;text-overflow:clip"><i class="c">内</i><i class="c">模</i></div>
<div class="cell" style="left:373px;top:33px;width:40px;padding:0;text-align:left"><i class="c">空</i></div>
<svg class="ab" style="left:400.5px;top:43.0px" width="11" height="8" viewBox="0 0 11 8"><path d="M1 1.5 L5.5 6 L10 1.5" fill="none" stroke="#111" stroke-width="2"/></svg>
<div class="cell" style="left:469px;top:33px;width:46px;padding:0;text-align:left;text-overflow:clip">S50C</div>
<div class="cell" style="left:519px;top:33px;width:46px;padding:0;text-align:right;text-overflow:clip">7.85</div>
<div class="cell" style="left:569px;top:33px;width:46px;padding:0;text-align:left;text-overflow:clip">1,000…</div>
<div class="cell" style="left:623px;top:33px;width:40px;padding:0;text-align:left"><i class="c">方</i></div>
<svg class="ab" style="left:650.5px;top:43.0px" width="11" height="8" viewBox="0 0 11 8"><path d="M1 1.5 L5.5 6 L10 1.5" fill="none" stroke="#111" stroke-width="2"/></svg>
<div class="cell" style="left:669px;top:33px;width:46px;padding:0;text-align:right;text-overflow:clip">123.00</div>
<div class="cell" style="left:719px;top:33px;width:46px;padding:0;text-align:right;text-overflow:clip">50.00</div>
<div class="cell" style="left:769px;top:33px;width:46px;padding:0;text-align:right;text-overflow:clip">231.00</div>
<div class="cell" style="left:869px;top:33px;width:46px;padding:0;text-align:left;text-overflow:clip">6,150…</div>
<div class="cell" style="left:919px;top:33px;width:46px;padding:0;text-align:right;text-overflow:clip">1.00</div>
<div class="cell" style="left:969px;top:33px;width:46px;padding:0;text-align:right;text-overflow:clip">11.15…</div>
<div class="cell" style="left:1019px;top:33px;width:46px;padding:0;text-align:right;text-overflow:clip">11.15…</div>
<div class="cell" style="left:1073px;top:33px;width:30px;padding:0;text-align:left"><i class="c">重</i><i class="c">量</i></div>
<svg class="ab" style="left:1101.0px;top:43.0px" width="11" height="8" viewBox="0 0 11 8"><path d="M1 1.5 L5.5 6 L10 1.5" fill="none" stroke="#111" stroke-width="2"/></svg>
<div class="cell" style="left:1119px;top:33px;width:46px;padding:0;text-align:right;text-overflow:clip">9.0000</div>
<div class="cell" style="left:1169px;top:33px;width:46px;padding:0;text-align:right;text-overflow:clip">100.37</div>
<div class="cell" style="left:1219px;top:33px;width:46px;padding:0;text-align:right;text-overflow:clip">1.00</div>
<div class="cell" style="left:1269px;top:33px;width:46px;padding:0;text-align:right;text-overflow:clip">100.37</div>
<div class="cell" style="left:1419px;top:33px;width:46px;padding:0;text-align:left;text-overflow:clip">P</div>
<div class="cell" style="left:1469px;top:33px;width:65px;padding:0;text-align:left;text-overflow:clip"><i class="c">非</i><i class="c">标</i><i class="c">件</i></div>
<div class="ab" style="left:0;top:62px;width:1494px;height:30px;background:#f5f5f5"></div>
<div class="ab" style="left:19.0px;top:70.5px;width:13px;height:13px;border:1px solid #767676;border-radius:2px;background:#fff"></div>
<div class="cell" style="left:42px;top:63px;width:36px;padding:0;text-align:left;text-overflow:clip">2</div>
<div class="cell" style="left:86px;top:63px;width:40px;padding:0;text-align:left"><i class="c">非</i><i class="c">标</i><i class="c">件</i></div>
<svg class="ab" style="left:137.5px;top:73.0px" width="11" height="8" viewBox="0 0 11 8"><path d="M1 1.5 L5.5 6 L10 1.5" fill="none" stroke="#111" stroke-width="2"/></svg>
<div class="cell" style="left:156px;top:63px;width:59px;padding:0;text-align:left;text-overflow:clip"><i class="c">零</i><i class="c">件</i>1</div>
<div class="cell" style="left:219px;top:63px;width:46px;padding:0;text-align:left;text-overflow:clip">1002</div>
<div class="cell" style="left:269px;top:63px;width:96px;padding:0;text-align:left;text-overflow:clip"><i class="c">镶</i><i class="c">件</i></div>
<div class="cell" style="left:373px;top:63px;width:40px;padding:0;text-align:left"><i class="c">空</i></div>
<svg class="ab" style="left:400.5px;top:73.0px" width="11" height="8" viewBox="0 0 11 8"><path d="M1 1.5 L5.5 6 L10 1.5" fill="none" stroke="#111" stroke-width="2"/></svg>
<div class="cell" style="left:469px;top:63px;width:46px;padding:0;text-align:left;text-overflow:clip">P20</div>
<div class="cell" style="left:519px;top:63px;width:46px;padding:0;text-align:right;text-overflow:clip">7.85</div>
<div class="cell" style="left:569px;top:63px;width:46px;padding:0;text-align:left;text-overflow:clip">1,000…</div>
<div class="cell" style="left:623px;top:63px;width:40px;padding:0;text-align:left"><i class="c">方</i></div>
<svg class="ab" style="left:650.5px;top:73.0px" width="11" height="8" viewBox="0 0 11 8"><path d="M1 1.5 L5.5 6 L10 1.5" fill="none" stroke="#111" stroke-width="2"/></svg>
<div class="cell" style="left:669px;top:63px;width:46px;padding:0;text-align:right;text-overflow:clip">100.00</div>
<div class="cell" style="left:719px;top:63px;width:46px;padding:0;text-align:right;text-overflow:clip">50.00</div>
<div class="cell" style="left:769px;top:63px;width:46px;padding:0;text-align:right;text-overflow:clip">666.00</div>
<div class="cell" style="left:869px;top:63px;width:46px;padding:0;text-align:left;text-overflow:clip">5,000…</div>
<div class="cell" style="left:919px;top:63px;width:46px;padding:0;text-align:right;text-overflow:clip">1.00</div>
<div class="cell" style="left:969px;top:63px;width:46px;padding:0;text-align:right;text-overflow:clip">26.14…</div>
<div class="cell" style="left:1019px;top:63px;width:46px;padding:0;text-align:right;text-overflow:clip">26.14…</div>
<div class="cell" style="left:1073px;top:63px;width:30px;padding:0;text-align:left"><i class="c">重</i><i class="c">量</i></div>
<svg class="ab" style="left:1101.0px;top:73.0px" width="11" height="8" viewBox="0 0 11 8"><path d="M1 1.5 L5.5 6 L10 1.5" fill="none" stroke="#111" stroke-width="2"/></svg>
<div class="cell" style="left:1119px;top:63px;width:46px;padding:0;text-align:right;text-overflow:clip">13.5000</div>
<div class="cell" style="left:1169px;top:63px;width:46px;padding:0;text-align:right;text-overflow:clip">352.90</div>
<div class="cell" style="left:1219px;top:63px;width:46px;padding:0;text-align:right;text-overflow:clip">1.00</div>
<div class="cell" style="left:1269px;top:63px;width:46px;padding:0;text-align:right;text-overflow:clip">352.90</div>
<div class="cell" style="left:1419px;top:63px;width:46px;padding:0;text-align:left;text-overflow:clip">P</div>
<div class="cell" style="left:1469px;top:63px;width:65px;padding:0;text-align:left;text-overflow:clip"><i class="c">非</i><i class="c">标</i><i class="c">件</i></div>
<div class="ab" style="left:0;top:92px;width:1494px;height:30px;background:#fff"></div>
<div class="ab" style="left:19.0px;top:100.5px;width:13px;height:13px;border:1px solid #767676;border-radius:2px;background:#fff"></div>
<div class="cell" style="left:42px;top:93px;width:36px;padding:0;text-align:left;text-overflow:clip">3</div>
<div class="cell" style="left:86px;top:93px;width:40px;padding:0;text-align:left"><i class="c">非</i><i class="c">标</i><i class="c">件</i></div>
<svg class="ab" style="left:137.5px;top:103.0px" width="11" height="8" viewBox="0 0 11 8"><path d="M1 1.5 L5.5 6 L10 1.5" fill="none" stroke="#111" stroke-width="2"/></svg>
<div class="cell" style="left:156px;top:93px;width:59px;padding:0;text-align:left;text-overflow:clip"><i class="c">零</i><i class="c">件</i>1</div>
<div class="cell" style="left:219px;top:93px;width:46px;padding:0;text-align:left;text-overflow:clip">1003</div>
<div class="cell" style="left:269px;top:93px;width:96px;padding:0;text-align:left;text-overflow:clip"><i class="c">滑</i><i class="c">块</i></div>
<div class="cell" style="left:373px;top:93px;width:40px;padding:0;text-align:left"><i class="c">空</i></div>
<svg class="ab" style="left:400.5px;top:103.0px" width="11" height="8" viewBox="0 0 11 8"><path d="M1 1.5 L5.5 6 L10 1.5" fill="none" stroke="#111" stroke-width="2"/></svg>
<div class="cell" style="left:469px;top:93px;width:46px;padding:0;text-align:left;text-overflow:clip">P20</div>
<div class="cell" style="left:519px;top:93px;width:46px;padding:0;text-align:right;text-overflow:clip">7.85</div>
<div class="cell" style="left:569px;top:93px;width:46px;padding:0;text-align:left;text-overflow:clip">1,000…</div>
<div class="cell" style="left:623px;top:93px;width:40px;padding:0;text-align:left"><i class="c">方</i></div>
<svg class="ab" style="left:650.5px;top:103.0px" width="11" height="8" viewBox="0 0 11 8"><path d="M1 1.5 L5.5 6 L10 1.5" fill="none" stroke="#111" stroke-width="2"/></svg>
<div class="cell" style="left:669px;top:93px;width:46px;padding:0;text-align:right;text-overflow:clip">100.00</div>
<div class="cell" style="left:719px;top:93px;width:46px;padding:0;text-align:right;text-overflow:clip">20.00</div>
<div class="cell" style="left:769px;top:93px;width:46px;padding:0;text-align:right;text-overflow:clip">777.00</div>
<div class="cell" style="left:869px;top:93px;width:46px;padding:0;text-align:left;text-overflow:clip">2,000…</div>
<div class="cell" style="left:919px;top:93px;width:46px;padding:0;text-align:right;text-overflow:clip">1.00</div>
<div class="cell" style="left:969px;top:93px;width:46px;padding:0;text-align:right;text-overflow:clip">12.19…</div>
<div class="cell" style="left:1019px;top:93px;width:46px;padding:0;text-align:right;text-overflow:clip">12.19…</div>
<div class="cell" style="left:1073px;top:93px;width:30px;padding:0;text-align:left"><i class="c">重</i><i class="c">量</i></div>
<svg class="ab" style="left:1101.0px;top:103.0px" width="11" height="8" viewBox="0 0 11 8"><path d="M1 1.5 L5.5 6 L10 1.5" fill="none" stroke="#111" stroke-width="2"/></svg>
<div class="cell" style="left:1119px;top:93px;width:46px;padding:0;text-align:right;text-overflow:clip">13.5000</div>
<div class="cell" style="left:1169px;top:93px;width:46px;padding:0;text-align:right;text-overflow:clip">164.69</div>
<div class="cell" style="left:1219px;top:93px;width:46px;padding:0;text-align:right;text-overflow:clip">1.00</div>
<div class="cell" style="left:1269px;top:93px;width:46px;padding:0;text-align:right;text-overflow:clip">164.69</div>
<div class="cell" style="left:1419px;top:93px;width:46px;padding:0;text-align:left;text-overflow:clip">P</div>
<div class="cell" style="left:1469px;top:93px;width:65px;padding:0;text-align:left;text-overflow:clip"><i class="c">非</i><i class="c">标</i><i class="c">件</i></div>
<div class="ab" style="left:0;top:122px;width:1494px;height:30px;background:#f5f5f5"></div>
<div class="ab" style="left:19.0px;top:130.5px;width:13px;height:13px;border:1px solid #767676;border-radius:2px;background:#fff"></div>
<div class="cell" style="left:42px;top:123px;width:36px;padding:0;text-align:left;text-overflow:clip">4</div>
<div class="cell" style="left:86px;top:123px;width:40px;padding:0;text-align:left"><i class="c">非</i><i class="c">标</i><i class="c">件</i></div>
<svg class="ab" style="left:137.5px;top:133.0px" width="11" height="8" viewBox="0 0 11 8"><path d="M1 1.5 L5.5 6 L10 1.5" fill="none" stroke="#111" stroke-width="2"/></svg>
<div class="cell" style="left:156px;top:123px;width:59px;padding:0;text-align:left;text-overflow:clip"><i class="c">零</i><i class="c">件</i>1</div>
<div class="cell" style="left:219px;top:123px;width:46px;padding:0;text-align:left;text-overflow:clip">1004</div>
<div class="cell" style="left:269px;top:123px;width:96px;padding:0;text-align:left;text-overflow:clip"><i class="c">斜</i><i class="c">顶</i></div>
<div class="cell" style="left:373px;top:123px;width:40px;padding:0;text-align:left"><i class="c">空</i></div>
<svg class="ab" style="left:400.5px;top:133.0px" width="11" height="8" viewBox="0 0 11 8"><path d="M1 1.5 L5.5 6 L10 1.5" fill="none" stroke="#111" stroke-width="2"/></svg>
<div class="cell" style="left:469px;top:123px;width:46px;padding:0;text-align:left;text-overflow:clip">P20</div>
<div class="cell" style="left:519px;top:123px;width:46px;padding:0;text-align:right;text-overflow:clip">7.85</div>
<div class="cell" style="left:569px;top:123px;width:46px;padding:0;text-align:left;text-overflow:clip">1,000…</div>
<div class="cell" style="left:623px;top:123px;width:40px;padding:0;text-align:left"><i class="c">方</i></div>
<svg class="ab" style="left:650.5px;top:133.0px" width="11" height="8" viewBox="0 0 11 8"><path d="M1 1.5 L5.5 6 L10 1.5" fill="none" stroke="#111" stroke-width="2"/></svg>
<div class="cell" style="left:669px;top:123px;width:46px;padding:0;text-align:right;text-overflow:clip">120.00</div>
<div class="cell" style="left:719px;top:123px;width:46px;padding:0;text-align:right;text-overflow:clip">44.00</div>
<div class="cell" style="left:769px;top:123px;width:46px;padding:0;text-align:right;text-overflow:clip">777.00</div>
<div class="cell" style="left:869px;top:123px;width:46px;padding:0;text-align:left;text-overflow:clip">5,280…</div>
<div class="cell" style="left:919px;top:123px;width:46px;padding:0;text-align:right;text-overflow:clip">4.00</div>
<div class="cell" style="left:969px;top:123px;width:46px;padding:0;text-align:right;text-overflow:clip">32.20…</div>
<div class="cell" style="left:1019px;top:123px;width:46px;padding:0;text-align:right;text-overflow:clip">128.8…</div>
<div class="cell" style="left:1073px;top:123px;width:30px;padding:0;text-align:left"><i class="c">重</i><i class="c">量</i></div>
<svg class="ab" style="left:1101.0px;top:133.0px" width="11" height="8" viewBox="0 0 11 8"><path d="M1 1.5 L5.5 6 L10 1.5" fill="none" stroke="#111" stroke-width="2"/></svg>
<div class="cell" style="left:1119px;top:123px;width:46px;padding:0;text-align:right;text-overflow:clip">13.5000</div>
<div class="cell" style="left:1169px;top:123px;width:46px;padding:0;text-align:right;text-overflow:clip">1,739…</div>
<div class="cell" style="left:1219px;top:123px;width:46px;padding:0;text-align:right;text-overflow:clip">1.00</div>
<div class="cell" style="left:1269px;top:123px;width:46px;padding:0;text-align:right;text-overflow:clip">1,739.08</div>
<div class="cell" style="left:1419px;top:123px;width:46px;padding:0;text-align:left;text-overflow:clip">P</div>
<div class="cell" style="left:1469px;top:123px;width:65px;padding:0;text-align:left;text-overflow:clip"><i class="c">非</i><i class="c">标</i><i class="c">件</i></div>
<div class="ab" style="left:0;top:152px;width:1494px;height:30px;background:#fff"></div>
<div class="ab" style="left:19.0px;top:160.5px;width:13px;height:13px;border:1px solid #767676;border-radius:2px;background:#fff"></div>
<div class="cell" style="left:42px;top:153px;width:36px;padding:0;text-align:left;text-overflow:clip">5</div>
<div class="cell" style="left:86px;top:153px;width:40px;padding:0;text-align:left"><i class="c">非</i><i class="c">标</i><i class="c">件</i></div>
<svg class="ab" style="left:137.5px;top:163.0px" width="11" height="8" viewBox="0 0 11 8"><path d="M1 1.5 L5.5 6 L10 1.5" fill="none" stroke="#111" stroke-width="2"/></svg>
<div class="cell" style="left:156px;top:153px;width:59px;padding:0;text-align:left;text-overflow:clip"><i class="c">零</i><i class="c">件</i>1</div>
<div class="cell" style="left:219px;top:153px;width:46px;padding:0;text-align:left;text-overflow:clip">1005</div>
<div class="cell" style="left:269px;top:153px;width:96px;padding:0;text-align:left;text-overflow:clip"><i class="c">斜</i><i class="c">顶</i><i class="c">座</i></div>
<div class="cell" style="left:373px;top:153px;width:40px;padding:0;text-align:left"><i class="c">空</i></div>
<svg class="ab" style="left:400.5px;top:163.0px" width="11" height="8" viewBox="0 0 11 8"><path d="M1 1.5 L5.5 6 L10 1.5" fill="none" stroke="#111" stroke-width="2"/></svg>
<div class="cell" style="left:469px;top:153px;width:46px;padding:0;text-align:left;text-overflow:clip">P20</div>
<div class="cell" style="left:519px;top:153px;width:46px;padding:0;text-align:right;text-overflow:clip">7.85</div>
<div class="cell" style="left:569px;top:153px;width:46px;padding:0;text-align:left;text-overflow:clip">1,000…</div>
<div class="cell" style="left:623px;top:153px;width:40px;padding:0;text-align:left"><i class="c">方</i></div>
<svg class="ab" style="left:650.5px;top:163.0px" width="11" height="8" viewBox="0 0 11 8"><path d="M1 1.5 L5.5 6 L10 1.5" fill="none" stroke="#111" stroke-width="2"/></svg>
<div class="cell" style="left:669px;top:153px;width:46px;padding:0;text-align:right;text-overflow:clip">130.00</div>
<div class="cell" style="left:719px;top:153px;width:46px;padding:0;text-align:right;text-overflow:clip">55.00</div>
<div class="cell" style="left:769px;top:153px;width:46px;padding:0;text-align:right;text-overflow:clip">888.00</div>
<div class="cell" style="left:869px;top:153px;width:46px;padding:0;text-align:left;text-overflow:clip">7,150…</div>
<div class="cell" style="left:919px;top:153px;width:46px;padding:0;text-align:right;text-overflow:clip">3.00</div>
<div class="cell" style="left:969px;top:153px;width:46px;padding:0;text-align:right;text-overflow:clip">49.84…</div>
<div class="cell" style="left:1019px;top:153px;width:46px;padding:0;text-align:right;text-overflow:clip">149.5…</div>
<div class="cell" style="left:1073px;top:153px;width:30px;padding:0;text-align:left"><i class="c">重</i><i class="c">量</i></div>
<svg class="ab" style="left:1101.0px;top:163.0px" width="11" height="8" viewBox="0 0 11 8"><path d="M1 1.5 L5.5 6 L10 1.5" fill="none" stroke="#111" stroke-width="2"/></svg>
<div class="cell" style="left:1119px;top:153px;width:46px;padding:0;text-align:right;text-overflow:clip">13.5000</div>
<div class="cell" style="left:1169px;top:153px;width:46px;padding:0;text-align:right;text-overflow:clip">2,018…</div>
<div class="cell" style="left:1219px;top:153px;width:46px;padding:0;text-align:right;text-overflow:clip">1.00</div>
<div class="cell" style="left:1269px;top:153px;width:46px;padding:0;text-align:right;text-overflow:clip">2,018.57</div>
<div class="cell" style="left:1419px;top:153px;width:46px;padding:0;text-align:left;text-overflow:clip">P</div>
<div class="cell" style="left:1469px;top:153px;width:65px;padding:0;text-align:left;text-overflow:clip"><i class="c">非</i><i class="c">标</i><i class="c">件</i></div>
<div class="ab" style="left:0;top:182px;width:1494px;height:30px;background:#f5f5f5"></div>
<div class="ab" style="left:19.0px;top:190.5px;width:13px;height:13px;border:1px solid #767676;border-radius:2px;background:#fff"></div>
<div class="cell" style="left:42px;top:183px;width:36px;padding:0;text-align:left;text-overflow:clip">6</div>
<div class="cell" style="left:86px;top:183px;width:40px;padding:0;text-align:left"><i class="c">非</i><i class="c">标</i><i class="c">件</i></div>
<svg class="ab" style="left:137.5px;top:193.0px" width="11" height="8" viewBox="0 0 11 8"><path d="M1 1.5 L5.5 6 L10 1.5" fill="none" stroke="#111" stroke-width="2"/></svg>
<div class="cell" style="left:156px;top:183px;width:59px;padding:0;text-align:left;text-overflow:clip"><i class="c">零</i><i class="c">件</i>1</div>
<div class="cell" style="left:219px;top:183px;width:46px;padding:0;text-align:left;text-overflow:clip">1006</div>
<div class="cell" style="left:269px;top:183px;width:96px;padding:0;text-align:left;text-overflow:clip"><i class="c">压</i><i class="c">座</i></div>
<div class="cell" style="left:373px;top:183px;width:40px;padding:0;text-align:left"><i class="c">空</i></div>
<svg class="ab" style="left:400.5px;top:193.0px" width="11" height="8" viewBox="0 0 11 8"><path d="M1 1.5 L5.5 6 L10 1.5" fill="none" stroke="#111" stroke-width="2"/></svg>
<div class="cell" style="left:469px;top:183px;width:46px;padding:0;text-align:left;text-overflow:clip">P20</div>
<div class="cell" style="left:519px;top:183px;width:46px;padding:0;text-align:right;text-overflow:clip">7.85</div>
<div class="cell" style="left:569px;top:183px;width:46px;padding:0;text-align:left;text-overflow:clip">1,000…</div>
<div class="cell" style="left:623px;top:183px;width:40px;padding:0;text-align:left"><i class="c">方</i></div>
<svg class="ab" style="left:650.5px;top:193.0px" width="11" height="8" viewBox="0 0 11 8"><path d="M1 1.5 L5.5 6 L10 1.5" fill="none" stroke="#111" stroke-width="2"/></svg>
<div class="cell" style="left:669px;top:183px;width:46px;padding:0;text-align:right;text-overflow:clip">140.00</div>
<div class="cell" style="left:719px;top:183px;width:46px;padding:0;text-align:right;text-overflow:clip">66.00</div>
<div class="cell" style="left:769px;top:183px;width:46px;padding:0;text-align:right;text-overflow:clip">65.00</div>
<div class="cell" style="left:869px;top:183px;width:46px;padding:0;text-align:left;text-overflow:clip">9,240…</div>
<div class="cell" style="left:919px;top:183px;width:46px;padding:0;text-align:right;text-overflow:clip">3.00</div>
<div class="cell" style="left:969px;top:183px;width:46px;padding:0;text-align:right;text-overflow:clip">4.7147</div>
<div class="cell" style="left:1019px;top:183px;width:46px;padding:0;text-align:right;text-overflow:clip">14.14…</div>
<div class="cell" style="left:1073px;top:183px;width:30px;padding:0;text-align:left"><i class="c">重</i><i class="c">量</i></div>
<svg class="ab" style="left:1101.0px;top:193.0px" width="11" height="8" viewBox="0 0 11 8"><path d="M1 1.5 L5.5 6 L10 1.5" fill="none" stroke="#111" stroke-width="2"/></svg>
<div class="cell" style="left:1119px;top:183px;width:46px;padding:0;text-align:right;text-overflow:clip">13.5000</div>
<div class="cell" style="left:1169px;top:183px;width:46px;padding:0;text-align:right;text-overflow:clip">190.95</div>
<div class="cell" style="left:1219px;top:183px;width:46px;padding:0;text-align:right;text-overflow:clip">1.00</div>
<div class="cell" style="left:1269px;top:183px;width:46px;padding:0;text-align:right;text-overflow:clip">190.95</div>
<div class="cell" style="left:1419px;top:183px;width:46px;padding:0;text-align:left;text-overflow:clip">P</div>
<div class="cell" style="left:1469px;top:183px;width:65px;padding:0;text-align:left;text-overflow:clip"><i class="c">非</i><i class="c">标</i><i class="c">件</i></div>
<div class="ab" style="left:0;top:212px;width:1494px;height:30px;background:#fff"></div>
<div class="ab" style="left:19.0px;top:220.5px;width:13px;height:13px;border:1px solid #767676;border-radius:2px;background:#fff"></div>
<div class="cell" style="left:42px;top:213px;width:36px;padding:0;text-align:left;text-overflow:clip">7</div>
<div class="cell" style="left:86px;top:213px;width:40px;padding:0;text-align:left"><i class="c">非</i><i class="c">标</i><i class="c">件</i></div>
<svg class="ab" style="left:137.5px;top:223.0px" width="11" height="8" viewBox="0 0 11 8"><path d="M1 1.5 L5.5 6 L10 1.5" fill="none" stroke="#111" stroke-width="2"/></svg>
<div class="cell" style="left:156px;top:213px;width:59px;padding:0;text-align:left;text-overflow:clip"><i class="c">零</i><i class="c">件</i>1</div>
<div class="cell" style="left:219px;top:213px;width:46px;padding:0;text-align:left;text-overflow:clip">1007</div>
<div class="cell" style="left:269px;top:213px;width:96px;padding:0;text-align:left;text-overflow:clip"><i class="c">铜</i><i class="c">公</i></div>
<div class="cell" style="left:373px;top:213px;width:40px;padding:0;text-align:left"><i class="c">空</i></div>
<svg class="ab" style="left:400.5px;top:223.0px" width="11" height="8" viewBox="0 0 11 8"><path d="M1 1.5 L5.5 6 L10 1.5" fill="none" stroke="#111" stroke-width="2"/></svg>
<div class="cell" style="left:469px;top:213px;width:46px;padding:0;text-align:left;text-overflow:clip">BeCu</div>
<div class="cell" style="left:519px;top:213px;width:46px;padding:0;text-align:right;text-overflow:clip">8.45</div>
<div class="cell" style="left:569px;top:213px;width:46px;padding:0;text-align:left;text-overflow:clip">1,000…</div>
<div class="cell" style="left:623px;top:213px;width:40px;padding:0;text-align:left"><i class="c">方</i></div>
<svg class="ab" style="left:650.5px;top:223.0px" width="11" height="8" viewBox="0 0 11 8"><path d="M1 1.5 L5.5 6 L10 1.5" fill="none" stroke="#111" stroke-width="2"/></svg>
<div class="cell" style="left:669px;top:213px;width:46px;padding:0;text-align:right;text-overflow:clip">150.00</div>
<div class="cell" style="left:719px;top:213px;width:46px;padding:0;text-align:right;text-overflow:clip">77.00</div>
<div class="cell" style="left:769px;top:213px;width:46px;padding:0;text-align:right;text-overflow:clip">453.00</div>
<div class="cell" style="left:869px;top:213px;width:46px;padding:0;text-align:left;text-overflow:clip">11,55…</div>
<div class="cell" style="left:919px;top:213px;width:46px;padding:0;text-align:right;text-overflow:clip">2.00</div>
<div class="cell" style="left:969px;top:213px;width:46px;padding:0;text-align:right;text-overflow:clip">44.21…</div>
<div class="cell" style="left:1019px;top:213px;width:46px;padding:0;text-align:right;text-overflow:clip">88.42…</div>
<div class="cell" style="left:1073px;top:213px;width:30px;padding:0;text-align:left"><i class="c">重</i><i class="c">量</i></div>
<svg class="ab" style="left:1101.0px;top:223.0px" width="11" height="8" viewBox="0 0 11 8"><path d="M1 1.5 L5.5 6 L10 1.5" fill="none" stroke="#111" stroke-width="2"/></svg>
<div class="cell" style="left:1119px;top:213px;width:46px;padding:0;text-align:right;text-overflow:clip">230.0000</div>
<div class="cell" style="left:1169px;top:213px;width:46px;padding:0;text-align:right;text-overflow:clip">20,33…</div>
<div class="cell" style="left:1219px;top:213px;width:46px;padding:0;text-align:right;text-overflow:clip">1.00</div>
<div class="cell" style="left:1269px;top:213px;width:46px;padding:0;text-align:right;text-overflow:clip">20,337.33</div>
<div class="cell" style="left:1419px;top:213px;width:46px;padding:0;text-align:left;text-overflow:clip">P</div>
<div class="cell" style="left:1469px;top:213px;width:65px;padding:0;text-align:left;text-overflow:clip"><i class="c">非</i><i class="c">标</i><i class="c">件</i></div>
<div class="ab" style="left:0;top:242px;width:1494px;height:30px;background:#d3e1fc"></div>
<div class="ab" style="left:19.0px;top:250.5px;width:13px;height:13px;border:1px solid #767676;border-radius:2px;background:#fff"></div>
<div class="cell" style="left:42px;top:243px;width:36px;padding:0;text-align:left;text-overflow:clip">8</div>
<div class="cell" style="left:86px;top:243px;width:40px;padding:0;text-align:left"><i class="c">非</i><i class="c">标</i><i class="c">件</i></div>
<svg class="ab" style="left:137.5px;top:253.0px" width="11" height="8" viewBox="0 0 11 8"><path d="M1 1.5 L5.5 6 L10 1.5" fill="none" stroke="#111" stroke-width="2"/></svg>
<div class="cell" style="left:156px;top:243px;width:59px;padding:0;text-align:left;text-overflow:clip"><i class="c">零</i><i class="c">件</i>1</div>
<div class="cell" style="left:219px;top:243px;width:46px;padding:0;text-align:left;text-overflow:clip">1008</div>
<div class="cell" style="left:269px;top:243px;width:96px;padding:0;text-align:left;text-overflow:clip"><i class="c">石</i><i class="c">墨</i><i class="c">公</i></div>
<div class="cell" style="left:373px;top:243px;width:40px;padding:0;text-align:left"><i class="c">空</i></div>
<svg class="ab" style="left:400.5px;top:253.0px" width="11" height="8" viewBox="0 0 11 8"><path d="M1 1.5 L5.5 6 L10 1.5" fill="none" stroke="#111" stroke-width="2"/></svg>
<div class="cell" style="left:469px;top:243px;width:46px;padding:0;text-align:left;text-overflow:clip">WX-5</div>
<div class="cell" style="left:519px;top:243px;width:46px;padding:0;text-align:right;text-overflow:clip">1.00</div>
<div class="cell" style="left:569px;top:243px;width:46px;padding:0;text-align:left;text-overflow:clip">1,000…</div>
<div class="cell" style="left:623px;top:243px;width:40px;padding:0;text-align:left"><i class="c">方</i></div>
<svg class="ab" style="left:650.5px;top:253.0px" width="11" height="8" viewBox="0 0 11 8"><path d="M1 1.5 L5.5 6 L10 1.5" fill="none" stroke="#111" stroke-width="2"/></svg>
<div class="cell" style="left:669px;top:243px;width:46px;padding:0;text-align:right;text-overflow:clip">150.00</div>
<div class="cell" style="left:719px;top:243px;width:46px;padding:0;text-align:right;text-overflow:clip">77.00</div>
<div class="cell" style="left:769px;top:243px;width:46px;padding:0;text-align:right;text-overflow:clip">453.00</div>
<div class="cell" style="left:869px;top:243px;width:46px;padding:0;text-align:left;text-overflow:clip">11,55…</div>
<div class="cell" style="left:919px;top:243px;width:46px;padding:0;text-align:right;text-overflow:clip">1.00</div>
<div class="cell" style="left:969px;top:243px;width:46px;padding:0;text-align:right;text-overflow:clip">5,232…</div>
<div class="cell" style="left:1019px;top:243px;width:46px;padding:0;text-align:right;text-overflow:clip">5,232…</div>
<div class="cell" style="left:1073px;top:243px;width:30px;padding:0;text-align:left"><i class="c">重</i><i class="c">量</i></div>
<svg class="ab" style="left:1101.0px;top:253.0px" width="11" height="8" viewBox="0 0 11 8"><path d="M1 1.5 L5.5 6 L10 1.5" fill="none" stroke="#111" stroke-width="2"/></svg>
<div class="cell" style="left:1119px;top:243px;width:46px;padding:0;text-align:right;text-overflow:clip">0.1300</div>
<div class="cell" style="left:1169px;top:243px;width:46px;padding:0;text-align:right;text-overflow:clip">680.18</div>
<div class="cell" style="left:1219px;top:243px;width:46px;padding:0;text-align:right;text-overflow:clip">1.00</div>
<div class="cell" style="left:1269px;top:243px;width:46px;padding:0;text-align:right;text-overflow:clip">680.18</div>
<div class="cell" style="left:1419px;top:243px;width:46px;padding:0;text-align:left;text-overflow:clip">P</div>
<div class="cell" style="left:1469px;top:243px;width:65px;padding:0;text-align:left;text-overflow:clip"><i class="c">非</i><i class="c">标</i><i class="c">件</i></div>
<div class="cell" style="left:80px;top:273px;width:120px;padding:0 0 0 3px"><i class="c">非</i><i class="c">标</i><i class="c">件</i> <i class="c">小</i><i class="c">计</i></div>
<div class="cell" style="left:769px;top:272px;width:46px;padding:0;text-align:right;text-overflow:clip;font-size:13px">4,310.00</div>
<div class="cell" style="left:919px;top:272px;width:46px;padding:0;text-align:right;text-overflow:clip;font-size:13px">16.00</div>
<div class="cell" style="left:1019px;top:272px;width:46px;padding:0;text-align:right;text-overflow:clip;font-size:13px">5,662.59</div>
<div class="cell" style="left:1169px;top:272px;width:46px;padding:0;text-align:right;text-overflow:clip;font-size:13px">25,584.14</div>
<div class="cell" style="left:1269px;top:272px;width:46px;padding:0;text-align:right;text-overflow:clip;font-size:13px">25,584.14</div>
<div class="cell" style="left:3px;top:299px;width:20px;padding:0;color:#f00;font-size:13px">&Sigma;</div>
<div class="cell" style="left:769px;top:300px;width:46px;padding:0;text-align:right;text-overflow:clip;font-size:13px">4,310.00</div>
<div class="cell" style="left:919px;top:300px;width:46px;padding:0;text-align:right;text-overflow:clip;font-size:13px">16.00</div>
<div class="cell" style="left:1019px;top:300px;width:46px;padding:0;text-align:right;text-overflow:clip;font-size:13px">5,662.59</div>
<div class="cell" style="left:1169px;top:300px;width:46px;padding:0;text-align:right;text-overflow:clip;font-size:13px">25,584.14</div>
<div class="cell" style="left:1269px;top:300px;width:46px;padding:0;text-align:right;text-overflow:clip;font-size:13px">25,584.14</div>
<div class="ab" style="left:40px;top:328px;width:1428px;height:10px;background:#c8c8c8;border-radius:3px"></div>
</div>
<div class="ab panel" style="top:774px;height:37px"></div>
<div class="ab tri-r" style="left:26px;top:789px"></div>
<div class="ab ptitle" style="left:40px;top:784px"><i class="c">配</i><i class="c">件</i><i class="c">信</i><i class="c">息</i></div>
<div class="ab panel" style="top:821px;height:40px"></div>
<div class="ab ptitle" style="left:40px;top:830px"><i class="c">工</i><i class="c">序</i><i class="c">信</i><i class="c">息</i></div>
<div class="ab" style="left:0;top:835px;width:1542px;height:50px;background:#edf1f8"></div>
<div class="ab" style="left:18px;top:845px;width:90px;height:30px;background:#d9e7f5;border-radius:4px;text-align:center;line-height:30px;font-size:14px;color:#1677e0"><i class="c">同</i><i class="c">步</i><i class="c">报</i><i class="c">价</i></div>
<div class="ab" style="left:1510px;top:848px;width:32px;height:21px;background:#f4f6fa;border-radius:3px 0 0 3px"></div>
<svg class="ab" style="left:1517px;top:853px" width="13" height="11" viewBox="0 0 13 11"><path d="M1.5 1 L5.5 5.5 L1.5 10 M6.8 1 L10.8 5.5 L6.8 10" fill="none" stroke="#1a6fe0" stroke-width="1.6"/></svg>
<div class="ab" style="left:1542px;top:98px;width:8px;height:381px;background:#c8c8c8;border-radius:4px 0 0 4px"></div>
</body></html>
